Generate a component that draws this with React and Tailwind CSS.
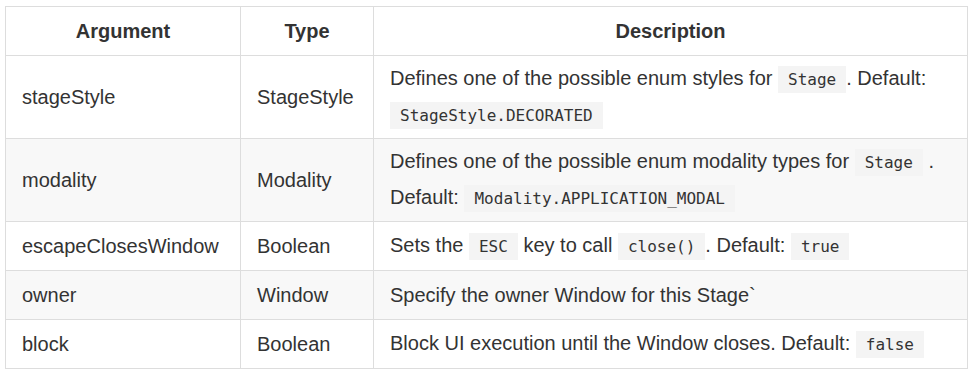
const rows = [
  {
    arg: "stageStyle",
    type: "StageStyle",
    h: "h-[83px]",
    desc: (
      <>
        Defines one of the possible enum styles for <Code>Stage</Code>. Default: <Code>StageStyle.DECORATED</Code>
      </>
    ),
  },
  {
    arg: "modality",
    type: "Modality",
    h: "h-[83px]",
    desc: (
      <>
        Defines one of the possible enum modality types for <Code>Stage</Code> . Default: <Code>Modality.APPLICATION_MODAL</Code>
      </>
    ),
  },
  {
    arg: "escapeClosesWindow",
    type: "Boolean",
    h: "h-[49px]",
    desc: (
      <>
        Sets the <Code>ESC</Code> key to call <Code>close()</Code>. Default: <Code>true</Code>
      </>
    ),
  },
  {
    arg: "owner",
    type: "Window",
    h: "h-[49px]",
    desc: <>Specify the owner Window for this Stage`</>,
  },
  {
    arg: "block",
    type: "Boolean",
    h: "h-[49px]",
    desc: (
      <>
        Block UI execution until the Window closes. Default: <Code>false</Code>
      </>
    ),
  },
];

function Code({ children }) {
  return (
    <code className="bg-[#f4f4f4] px-[10px] py-[4px] text-[16px] font-['DejaVu_Sans_Mono',monospace] text-[#333]">
      {children}
    </code>
  );
}

export default function App() {
  return (
    <div className="bg-white w-[974px] h-[377px] pl-[5px] pt-[6px] font-['Liberation_Sans',Arial,sans-serif] text-[20px] text-[#333]">
      <table className="w-[962px] border-collapse table-fixed">
        <colgroup>
          <col className="w-[235px]" />
          <col className="w-[133px]" />
          <col className="w-[594px]" />
        </colgroup>
        <thead>
          <tr className="h-[49px]">
            <th className="border border-[#dddddd] px-4 py-0 font-bold text-center">Argument</th>
            <th className="border border-[#dddddd] px-4 py-0 font-bold text-center">Type</th>
            <th className="border border-[#dddddd] px-4 py-0 font-bold text-center">Description</th>
          </tr>
        </thead>
        <tbody>
          {rows.map((r, i) => (
            <tr key={r.arg} className={`${r.h} ${i % 2 === 1 ? "bg-[#f8f8f8]" : "bg-white"}`}>
              <td className="border border-[#dddddd] px-4 py-0 leading-[34px]">{r.arg}</td>
              <td className="border border-[#dddddd] px-4 py-0 leading-[34px]">{r.type}</td>
              <td className="border border-[#dddddd] px-4 py-0 leading-[34px]">{r.desc}</td>
            </tr>
          ))}
        </tbody>
      </table>
    </div>
  );
}
